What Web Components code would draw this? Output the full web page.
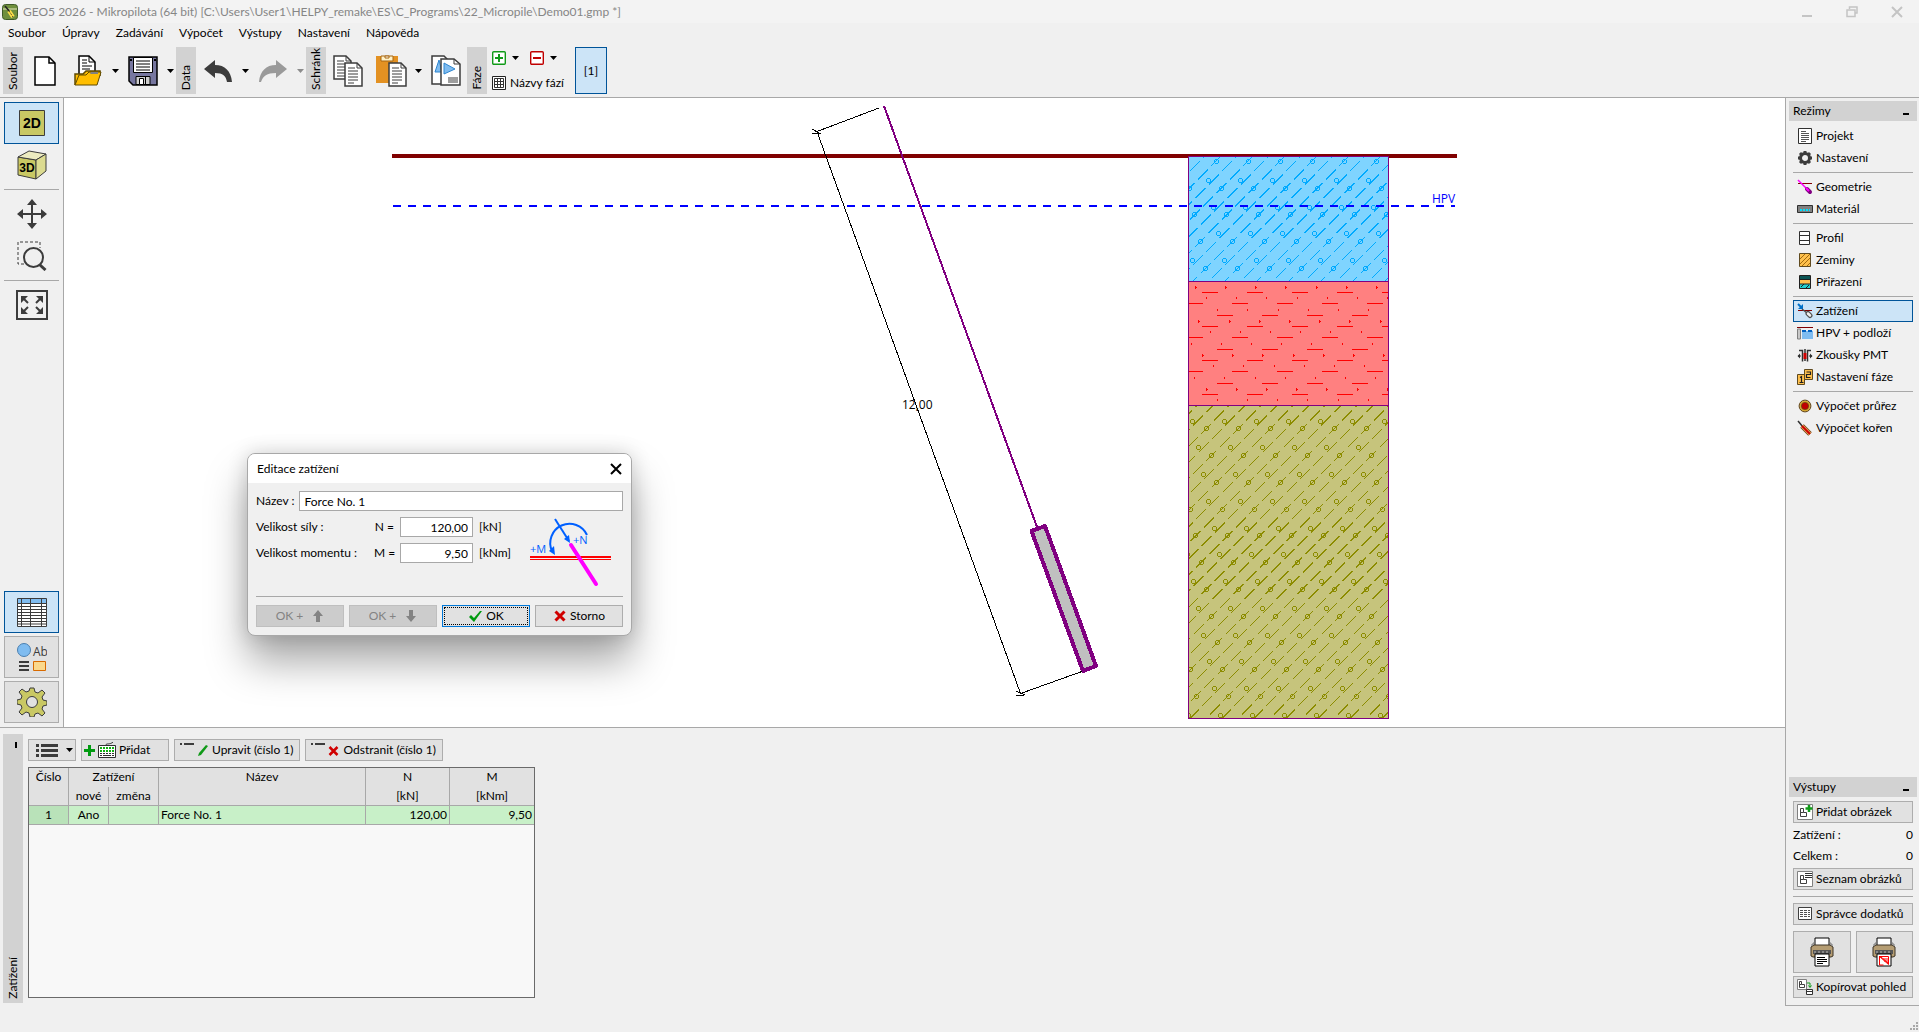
<!DOCTYPE html>
<html lang="cs">
<head>
<meta charset="utf-8">
<title>GEO5 2026 - Mikropilota</title>
<style>
html, body { margin: 0; height: 100%; background: #f0f0f0; }
body { font: 12px/16px Lato, "Open Sans", "Noto Sans", sans-serif; color: #000; }
</style>
</head>
<body>
<geo-app></geo-app>
<script>
const BASE = `
*, *::before, *::after { box-sizing: border-box; }
button { font: inherit; color: inherit; margin: 0; padding: 0; border: 0; background: none; }
:host([hidden]) { display: none; }
`;

function define(name, css, html, setup) {
  const tpl = document.createElement('template');
  tpl.innerHTML = `<style>${BASE}${css}</style>${html}`;
  customElements.define(name, class extends HTMLElement {
    constructor() {
      super();
      this.attachShadow({ mode: 'open' }).append(tpl.content.cloneNode(true));
    }
    connectedCallback() { if (setup) setup(this, this.shadowRoot); }
  });
}

/* name: [width, height, svg markup] */
const doc = (x, y, lines) => `<path d="M${x} ${y}h12l5 5v18h-17z" fill="#fff" stroke="#3c3c3c" stroke-width="1.5"/><path d="M${x + 12} ${y}v5h5" fill="none" stroke="#3c3c3c"/>${lines}`;
const frameB = '<path d="M.5 .5h15v15h-15z" fill="#fff" stroke="#808080"/><path d="M3.500 12.500v-8h3v4h3v4zM3.500 8.500h3" fill="none" stroke="#404040"/>';
const printer = extra => `<path d="M5 1h14v9H5z" fill="#fff" stroke="#000"/><path d="M1 10l3-2h16l3 2v9l-2 1H3l-2-1z" fill="#b59d73" stroke="#3c3224"/><path d="M1 8h2v-2h2M23 8h-2v-2h-2" fill="none" stroke="#777"/><path d="M3 13h18v4H3z" fill="#555"/><path d="M4 14h2v2H4zm4 0h2v2H8zm4 0h2v2h-2zm4 0h2v2h-2z" fill="#888"/><path d="M5 17h14v12H5z" fill="#fff" stroke="#000"/>${extra}`;
const ICONS = {
  app: [16, 16, '<rect x=".5" y=".5" width="15" height="15" rx="3" fill="#6f8f3c" stroke="#3f5a28"/><path d="M1 5h14" stroke="#e8e8c0"/><path d="M3 2l5 6" stroke="#222" stroke-width="1.500"/><path d="M7 7l4 6" stroke="#ffe04a" stroke-width="4"/><path d="M7 7l4 6" stroke="#222" stroke-width="1" stroke-dasharray="1 1"/>'],
  min: [12, 12, '<path d="M1 9h10v2H1z" fill="#c4c4c4"/>'],
  restore: [12, 12, '<path d="M3.500 3V1h7.500v6H9" fill="none" stroke="#c4c4c4" stroke-width="1.500"/><path d="M1 4h8v6.500H1z" fill="none" stroke="#c4c4c4" stroke-width="1.500"/>'],
  close: [12, 12, '<path d="M1 1l10 10M11 1L1 11" stroke="#c4c4c4" stroke-width="2"/>'],
  closeBlack: [12, 12, '<path d="M1 1l10 10M11 1L1 11" stroke="#000" stroke-width="2"/>'],
  arrow: [7, 4, '<path d="M0 0h7L3.500 4z" fill="currentColor"/>'],
  newfile: [22, 30, '<path d="M1 1h14l6 6v22H1z" fill="#fff" stroke="#000" stroke-width="1.500"/><path d="M15 1v6h6" fill="none" stroke="#000" stroke-width="1.500"/>'],
  open: [28, 31, '<path d="M5 22V1h10l6 6v11" fill="#fff" stroke="#000" stroke-width="1.500"/><path d="M15 1v6h6M8 5h5M8 8h5M8 11h10M8 14h8" fill="none" stroke="#000"/><path d="M1 30V19h8l3-3h14v5" fill="#ffbe00" stroke="#5f4a00" stroke-width="1.500"/><path d="M1 30l4-10h7l3-3h12l-4 13z" fill="#ffbe00" stroke="#5f4a00"/><path d="M17 17h7v2h-8z" fill="#808080"/>'],
  save: [30, 30, '<path d="M1 1h28v28H5l-4-4z" fill="#7777a0" stroke="#000" stroke-width="1.500"/><path d="M5.500 1.500h19v15h-19z" fill="#fff" stroke="#000"/><path d="M8 5h14M8 8h14M8 11h14M8 14h14" stroke="#000"/><path d="M26 3h2v2h-2zM2 3h2v2H2z" fill="#000"/><path d="M8 20.500h14v8H8z" fill="#d0d0d0" stroke="#000"/><path d="M11.500 22.500h4v6h-4z" fill="#fff" stroke="#000"/><path d="M17.500 21v8" stroke="#000"/>'],
  undo: [28, 24, '<path d="M0 10L11 1v5c10 0 16 6 17 17h-5c-1-6-4-9-12-9v5z" fill="#3c3c3c"/>'],
  redo: [28, 24, '<path d="M28 10L17 1v5C7 6 1 12 0 23h2c2-6 6-9 15-9v5z" fill="#9a9a9a"/>'],
  copy: [30, 32, doc(1, 1, '<path d="M4 6h7M4 9h10M4 12h10M4 15h10M4 18h8M4 21h8" stroke="#3c3c3c"/>') + doc(12, 8, '<path d="M15 13h7M15 16h10M15 19h10M15 22h10M15 25h10M15 28h6" stroke="#3c3c3c"/>')],
  paste: [31, 32, '<path d="M0 1h22v27H0z" fill="#e39122"/><path d="M5 1h12v5H5z" fill="#fff2c8" stroke="#a86710"/><path d="M9 1h4v2H9z" fill="#fff" stroke="#a86710"/>' + doc(13, 8, '<path d="M16 13h7M16 16h10M16 19h10M16 22h10M16 25h10M16 28h6" stroke="#3c3c3c"/>')],
  copypic: [30, 32, '<path d="M1 1h12l4 4v24H1z" fill="#fff" stroke="#3c3c3c" stroke-width="1.500"/><path d="M8 5l-4 12h7z" fill="#7fbcf0" stroke="#2f86d0"/><path d="M10 4h13l6 5v21H10z" fill="#fff" stroke="#3c3c3c" stroke-width="1.500"/><path d="M23 4v5h6" fill="none" stroke="#3c3c3c"/><path d="M13 8l11 6-11 5z" fill="#7fbcf0" stroke="#2f86d0"/><path d="M17 23h10M17 25h10M17 27h10" stroke="#3c3c3c"/>'],
  boxplus: [14, 14, '<rect x=".7" y=".7" width="12.600" height="12.600" rx="1" fill="#fff" stroke="#109a18" stroke-width="1.400"/><path d="M7 3v8M3 7h8" stroke="#109a18" stroke-width="2"/>'],
  boxminus: [14, 14, '<rect x=".7" y=".7" width="12.600" height="12.600" rx="1" fill="#fff" stroke="#c00000" stroke-width="1.400"/><path d="M3 7h8" stroke="#c00000" stroke-width="2"/>'],
  grid: [14, 14, '<path d="M.5 .5h13v13H.5z" fill="#fff" stroke="#222"/><path d="M2.500 2.500h9v9h-9zM2.500 5.500h9M2.500 8.500h9M5.500 2.500v9M8.500 2.500v9" fill="none" stroke="#333"/>'],
  d2: [26, 26, '<path d="M.5 .5h25v25H.5z" fill="#c9c864" stroke="#3c3c3c"/><text x="13" y="18" text-anchor="middle" font-family="Liberation Sans, sans-serif" font-weight="700" font-size="14" fill="#000">2D</text>'],
  d3: [30, 30, '<path d="M1 7L19 10V29L1 25z" fill="#c9c864" stroke="#3c3c3c"/><path d="M1 7L12 1l17 3-10 6z" fill="#ecebc0" stroke="#3c3c3c"/><path d="M19 10L29 4v17L19 29z" fill="#dcdb90" stroke="#3c3c3c"/><text x="10" y="22" text-anchor="middle" font-family="Liberation Sans, sans-serif" font-weight="700" font-size="12" fill="#000">3D</text>'],
  move: [30, 30, '<path d="M15 4v22M4 15h22" stroke="#3c3c3c" stroke-width="2"/><path d="M15 0l5 6H10zM15 30l5-6H10zM0 15l6-5v10zM30 15l-6-5v10z" fill="#3c3c3c"/>'],
  zoom: [30, 30, '<path d="M7 23H1V1h22v6" fill="none" stroke="#3c3c3c" stroke-dasharray="3 2"/><circle cx="16.500" cy="16.500" r="9.500" fill="none" stroke="#3c3c3c" stroke-width="2"/><path d="M22.500 23.500l6 5.500" stroke="#3c3c3c" stroke-width="3"/>'],
  fit: [32, 30, '<path d="M1 1h30v28H1z" fill="none" stroke="#3c3c3c" stroke-width="2"/><path d="M5 6h7l-7 7zM27 6h-7l7 7zM5 24h7l-7-7zM27 24h-7l7-7z" fill="#3c3c3c"/><path d="M8 9l4 4M24 9l-4 4M8 21l4-4M24 21l-4-4" stroke="#3c3c3c" stroke-width="2"/>'],
  table: [30, 29, '<path d="M1 1h28v27H1z" fill="#fff"/><path d="M1 1h28v4H1z" fill="#7fbcf0"/><path d="M.5 .5h29v28H.5zM0 5.500h30M0 8.500h30M0 11.500h30M0 14.500h30M0 17.500h30M0 20.500h30M0 23.500h30M0 26h30M4.500 0v29M13.500 0v29M24.500 0v29" fill="none" stroke="#3c3c3c"/>'],
  legend: [30, 28, '<circle cx="7" cy="7" r="6.500" fill="#7fbcf0" stroke="#4a7fb0"/><text x="16" y="13" font-family="Open Sans, sans-serif" font-size="12" fill="#3c3c3c">Ab</text><path d="M2 18h10v2H2zM2 22h10v2H2zM2 26h10v2H2z" fill="#3c3c3c"/><path d="M16.500 18.500h12v9h-12z" fill="#fbd88c" stroke="#d86a00"/>'],
  gear: [30, 30, '<path d="M13 1h4l1 4 3 1 4-3 3 3-3 4 1 3 4 1v4l-4 1-1 3 3 4-3 3-4-3-3 1-1 3h-4l-1-4-3-1-4 3-3-3 3-4-1-3-4-1v-4l4-1 1-3-3-4 3-3 4 3 3-1z" fill="#c9c864" stroke="#3c3c3c"/><circle cx="15" cy="15" r="5.500" fill="#e1e1e1" stroke="#3c3c3c"/>'],
  project: [16, 16, '<path d="M1.500 .5h13v15h-13z" fill="#fff" stroke="#303030"/><path d="M4 3.500h5M4 5.500h8M4 7.500h8M4 9.500h8M4 11.500h8M4 13.500h5" stroke="#555"/>'],
  cog: [16, 16, '<circle cx="8" cy="8" r="4.500" fill="none" stroke="#3c3c3c" stroke-width="3"/><path d="M8 1v3M8 12v3M1 8h3M12 8h3M3 3l2 2M11 11l2 2M13 3l-2 2M3 13l2-2" stroke="#3c3c3c" stroke-width="3"/>'],
  geom: [16, 16, '<path d="M1 4.500h14" stroke="#800000"/><path d="M1 1l9 9" stroke="#f0f" stroke-width="1.500"/><path d="M10 10l3 3" stroke="#800080" stroke-width="4" stroke-linecap="round"/><path d="M9 9l3 3" stroke="#f0f" stroke-width="2"/>'],
  material: [16, 16, '<path d="M.5 4.500h15v7H.5z" fill="#808080" stroke="#303030"/><path d="M3 9h10" stroke="#00e0ff" stroke-width="2" stroke-dasharray="2 1"/>'],
  profile: [16, 16, '<path d="M2.500 1.500h10v13h-10zM2.500 5.500h10M2.500 10.500h10" fill="#fff" stroke="#303030"/>'],
  soils: [16, 16, '<path d="M2.500 1.500h11v13h-11z" fill="#ffc04c" stroke="#5f4a20"/><path d="M3 7l5-5M3 12L13 2M5 14l8-8M10 14l3-3" stroke="#a06a10"/>'],
  assign: [16, 16, '<path d="M2.500 1.500h11v13h-11z" fill="#ffc04c" stroke="#202020"/><path d="M3 2h10v3H3z" fill="#0b5555"/><path d="M3 10h10v4H3z" fill="#20d0d0"/><path d="M3 5.500h10M3 10h10M4 13l3-3M9 14l3-3" stroke="#202020"/>'],
  load: [16, 16, '<path d="M1 7.500h14" stroke="#800000"/><path d="M1 1l4 4" stroke="#0070c8" stroke-width="2"/><path d="M6 1v5H1z" fill="#0070c8"/><path d="M5 6l5 4" stroke="#505050" stroke-width="1.500"/><path d="M11 10.500l2 2" stroke="#505050" stroke-width="5" stroke-linecap="round"/><path d="M11 10.500l2 2" stroke="#f0f0f0" stroke-width="2.500" stroke-linecap="round"/>'],
  gwt: [16, 16, '<path d="M0 2.500h16" stroke="#800000"/><path d="M.5 4h3v10h-3z" fill="#c8c8c8" stroke="#808080"/><path d="M5 6h11v8H5z" fill="#7fbcf0"/><path d="M5 6h11" stroke="#0060c0" stroke-width="2" stroke-dasharray="4 2"/>'],
  pmt: [16, 16, '<path d="M2 3.500h3.500v11M14 3.500h-3.500v11" fill="none" stroke="#303030" stroke-width="1.500"/><path d="M8 2v12" stroke="#303030" stroke-width="1.500"/><path d="M8 6v6" stroke="#d00000" stroke-width="3"/><path d="M1 9h3M15 9h-3" stroke="#303030"/><path d="M3 6.500v5L.5 9zM13 6.500v5L15.500 9z" fill="#303030"/>'],
  stage: [16, 16, '<path d="M.5 5.500h7v10h-7z" fill="#ffc04c" stroke="#5f4a20"/><path d="M7.500 .5h8v10h-8z" fill="#ffc04c" stroke="#5f4a20"/><path d="M3 8.500l1.500-1v6M2.500 13.500h4M9.500 3h4v2.500h-4v3h4" fill="none" stroke="#202020" stroke-width="1.200"/>'],
  section: [16, 16, '<circle cx="8" cy="8" r="4.500" fill="#c00000" stroke="#d8a830" stroke-width="2"/><circle cx="8" cy="8" r="5.900" fill="none" stroke="#5f4010"/><circle cx="8" cy="8" r="3.700" fill="none" stroke="#5f4010" stroke-width=".7"/>'],
  root: [16, 16, '<path d="M1 1l5 6" stroke="#303030" stroke-width="1.500"/><path d="M5 6l8 8" stroke="#6f3a10" stroke-width="5"/><path d="M5 6l8 8" stroke="#e0b060" stroke-width="3.500"/><path d="M5 6l8 8" stroke="#d00000" stroke-width="2"/>'],
  picadd: [16, 16, frameB + '<path d="M12 1v7M8.500 4.500h7" stroke="#109a18" stroke-width="2.500"/>'],
  piclist: [16, 16, frameB + '<path d="M8 2.500h7M8 4.500h7M8 6.500h7" stroke="#303030"/>'],
  annex: [16, 16, '<path d="M1.500 1.500h13v12h-13z" fill="#fff" stroke="#404040"/><path d="M3 4.500h10M3 6.500h10M3 8.500h10M3 10.500h10" stroke="#505050" stroke-dasharray="3 1"/>'],
  piccopy: [16, 16, '<path d="M.5 .5h9v10h-9z" fill="#fff" stroke="#808080"/><path d="M2.500 8.500v-6h2v3h3v3zM2.500 5.500h2" fill="none" stroke="#404040"/><path d="M10 4h3v4M11.500 6.500L13 8.500l1.500-2" fill="none" stroke="#109a18"/><path d="M9.500 10.500h6v5h-6z" fill="#fff" stroke="#303030"/><path d="M10 12.500h5" stroke="#303030"/>'],
  print: [24, 30, printer('<path d="M7 20.500h8M7 22.500h10M7 24.500h10M7 26.500h6" stroke="#000"/>')],
  printpic: [24, 30, printer('<path d="M7.500 19.500h9v8z" fill="#fff" stroke="#f00"/><path d="M9 20l7 6M11 22h5M12 24h4M7.500 19v9h4" fill="none" stroke="#f00"/>')],
  list: [22, 14, '<path d="M0 1h3v3H0zM0 6h3v3H0zM0 11h3v3H0zM5 1h17v3H5zM5 6h17v3H5zM5 11h17v3H5z" fill="#3c3c3c"/>'],
  plus: [11, 11, '<path d="M5.500 0v11M0 5.500h11" stroke="#009a10" stroke-width="3"/>'],
  keyboard: [18, 16, '<path d="M8 3c0-2 4 0 7-3" fill="none" stroke="#303030"/><path d="M.5 3.500h17v12H.5z" fill="#fff" stroke="#303030"/><path d="M2 6h14M2 9h14" stroke="#10b010" stroke-width="2" stroke-dasharray="2 1"/><path d="M2 11.500h14" stroke="#303030" stroke-dasharray="2 1"/><path d="M2 13.500h2M5 13.500h8M14 13.500h2" stroke="#303030"/>'],
  edit: [28, 14, '<path d="M0 0h2v2H0zM4 0h10v2H4z" fill="#3c3c3c"/><path d="M18 13l1-3 7-8 2 1-7 9z" fill="#109a18"/>'],
  remove: [28, 14, '<path d="M0 0h2v2H0zM4 0h10v2H4z" fill="#3c3c3c"/><path d="M18.500 4l8 8M26.500 4l-8 8" stroke="#d00000" stroke-width="2.500"/>'],
  up: [10, 12, '<path d="M5 0l5 6H7v6H3V6H0z" fill="#838383"/>'],
  down: [10, 12, '<path d="M5 12l5-6H7V0H3v6H0z" fill="#838383"/>'],
  check: [13, 11, '<path d="M0 6l2-2 3 3 6-7h2L5 11z" fill="#009a10"/>'],
  cross: [12, 12, '<path d="M1.500 1.500l9 9M10.500 1.500l-9 9" stroke="#d00000" stroke-width="3"/>'],
  grip: [9, 9, '<path d="M6 0h2v2H6zM6 3h2v2H6zM3 3h2v2H3zM6 6h2v2H6zM3 6h2v2H3zM0 6h2v2H0z" fill="#a8a8a8"/>'],
  scheme: [82, 70, '<path d="M25 2l14 22" stroke="#0060ff" stroke-width="2" fill="none"/><path d="M40 26l-6-4 5-4z" fill="#0060ff"/><path d="M57 18A19 19 0 1 0 22 34" stroke="#0060ff" stroke-width="2" fill="none"/><path d="M25 38l-6-4 5-5z" fill="#0060ff"/><path d="M0 40h81" stroke="#f00" stroke-width="2"/><path d="M0 42.500h81" stroke="#f00"/><path d="M41 28l25 39" stroke="#f0f" stroke-width="4" stroke-linecap="round"/><text x="0" y="36" font-family="Open Sans, sans-serif" font-size="11" fill="#0060ff">+M</text><text x="43" y="27" font-family="Open Sans, sans-serif" font-size="11" fill="#0060ff">+N</text>'],
};

define('geo-icon', `:host { display: inline-flex; flex: none; } svg { display: block; }`, `<svg aria-hidden="true"></svg>`, (el, root) => {
  const [w, h, body] = ICONS[el.getAttribute('name')];
  const svg = root.querySelector('svg');
  svg.setAttribute('width', w);
  svg.setAttribute('height', h);
  svg.setAttribute('viewBox', `0 0 ${w} ${h}`);
  svg.innerHTML = body;
});

define('title-bar', `
:host { display: flex; align-items: center; height: 23px; padding: 0 16px 0 2px; background: #f3f3f3; color: #868686; gap: 5px; }
.text { flex: 1; white-space: nowrap; overflow: hidden; }
.controls { display: flex; gap: 33px; }
.controls button { display: flex; }
`, `<geo-icon name="app"></geo-icon><span class="text"><slot></slot></span>
<div class="controls"><button aria-label="Minimalizovat"><geo-icon name="min"></geo-icon></button><button aria-label="Obnovit"><geo-icon name="restore"></geo-icon></button><button aria-label="Zavřít"><geo-icon name="close"></geo-icon></button></div>`);

define('menu-bar', `
:host { display: flex; height: 20px; align-items: center; padding-left: 8px; gap: 16px; white-space: nowrap; }
`, `<slot></slot>`);

define('menu-item', `:host { display: block; } button { display: block; }`, `<button><slot></slot></button>`);

define('side-tab', `
:host { display: flex; flex: none; width: 20px; align-items: flex-end; justify-content: center; background: #d2d2d2; padding-bottom: 4px; }
.t { writing-mode: vertical-rl; transform: rotate(180deg); white-space: nowrap; line-height: 20px; }
`, `<span class="t"><slot></slot></span>`);

define('tool-group', `:host { display: flex; height: 47px; gap: 1px; }`, `<slot></slot>`);

define('tool-button', `
:host { display: flex; }
button { display: flex; align-items: center; justify-content: center; }
.main { width: 42px; }
.drop { width: 12px; }
:host([dim]) .drop { color: #8c8c8c; }
`, `<button class="main"><slot></slot></button>`, (el, root) => {
  root.querySelector('.main').setAttribute('aria-label', el.getAttribute('label'));
  if (el.hasAttribute('menu')) {
    const b = document.createElement('button');
    b.className = 'drop';
    b.setAttribute('aria-label', el.getAttribute('label') + ' – nabídka');
    b.innerHTML = '<geo-icon name="arrow"></geo-icon>';
    root.append(b);
  }
});

define('phase-tools', `
:host { display: flex; padding-left: 4px; gap: 11px; }
.col { display: flex; flex-direction: column; justify-content: space-between; padding: 4px 0 3px; }
.row { display: flex; align-items: center; gap: 6px; }
.row button { display: flex; align-items: center; }
.pair { display: flex; }
.row .drop { width: 18px; justify-content: center; }
.row .names { gap: 4px; height: 16px; white-space: nowrap; }
.phase { width: 32px; background: #cce4f7; border: 1px solid #005499; }
`, `<div class="col">
<div class="row"><div class="pair"><button aria-label="Přidat fázi"><geo-icon name="boxplus"></geo-icon></button><button class="drop" aria-label="Nabídka přidání"><geo-icon name="arrow"></geo-icon></button></div>
<div class="pair"><button aria-label="Odebrat fázi"><geo-icon name="boxminus"></geo-icon></button><button class="drop" aria-label="Nabídka odebrání"><geo-icon name="arrow"></geo-icon></button></div></div>
<div class="row"><button class="names"><geo-icon name="grid"></geo-icon>Názvy fází</button></div>
</div><button class="phase">[1]</button>`);

define('view-button', `
:host { display: block; }
button { display: flex; width: 100%; height: 42px; align-items: center; justify-content: center; border: 1px solid transparent; }
:host([raised]) button { background: #e1e1e1; border-color: #adadad; }
:host([active]) button { background: #cce4f7; border-color: #005499; }
`, `<button><slot></slot></button>`, (el, root) => root.querySelector('button').setAttribute('aria-label', el.getAttribute('label')));

define('geo-rule', `:host { display: block; height: 1px; margin: 3px 0; background: #a8a8a8; }`, ``);

define('view-tools', `
:host { display: flex; flex: none; flex-direction: column; justify-content: space-between; width: 64px; padding: 4px; border-right: 1px solid #a8a8a8; }
.low { display: flex; flex-direction: column; gap: 3px; }
`, `<div>
<view-button active label="2D"><geo-icon name="d2"></geo-icon></view-button>
<view-button label="3D"><geo-icon name="d3"></geo-icon></view-button>
<geo-rule></geo-rule>
<view-button label="Posun"><geo-icon name="move"></geo-icon></view-button>
<view-button label="Lupa"><geo-icon name="zoom"></geo-icon></view-button>
<geo-rule></geo-rule>
<view-button label="Celý výkres"><geo-icon name="fit"></geo-icon></view-button>
</div>
<div class="low">
<view-button active label="Tabulka"><geo-icon name="table"></geo-icon></view-button>
<view-button raised label="Legenda"><geo-icon name="legend"></geo-icon></view-button>
<view-button raised label="Nastavení zobrazení"><geo-icon name="gear"></geo-icon></view-button>
</div>`);

function gravelHatch(x0, y0, x1, y1) {
  let lines = '', rings = '';
  const ax = 1216, ay = 161.300, dx = 5.400, dy = 26.750;
  for (let k = -1; k < 23; k++) {
    for (let m = -8; m < 10; m++) {
      const x = ax + k * dx + m * 32, y = ay + k * dy;
      if (x < x0 - 50 || x > x1 + 50 || y < y0 - 50 || y > y1 + 50) continue;
      for (const [ox, oy] of [[0, 0], [13.300, -13.400], [11, 5], [24.300, -8.400]]) {
        const cx = x + ox, cy = y + oy;
        lines += `M${cx - 5} ${cy + 5}L${cx + 5} ${cy - 5}`;
      }
      for (const [ox, oy] of [[0, 0], [-8, 19]]) {
        const rx = Math.floor(x + ox) + .5, ry = Math.floor(y + oy) + .5;
        rings += `M${rx - 2} ${ry}a2 2 0 1 1 4 0a2 2 0 1 1 -4 0`;
      }
    }
  }
  return lines + rings;
}

function clayHatch(x0, y0, x1, y1) {
  let d = '';
  for (let r = 0, y = y0 + 11; y < y1; r++) {
    const off = [14, -1, 29][r % 3];
    for (let x = x0 + off - 45; x < x1; x += 45) d += `M${x} ${y + .5}h16`;
    y += [11, 12, 11][r % 3];
  }
  for (let k = 0; k < 11; k++) {
    const y = Math.round(y0 + 6 + k * 11.330);
    for (let m = -5; m < 7; m++) {
      const x = Math.round(1225 + k * 11.200 + m * 30.200 - Math.floor(k / 3) * 30);
      d += k % 3 ? `M${x + .5} ${y - 1}v2` : `M${x + .5} ${y - 1}v3M${x + 1} ${y + .5}h1`;
    }
  }
  return d;
}

define('pile-canvas', `
:host { display: block; flex: 1; min-width: 0; min-height: 0; background: #fff; overflow: hidden; }
svg { display: block; width: 100%; height: 100%; }
text { font: 12px "Open Sans", "Noto Sans", sans-serif; }
`, `<svg viewBox="64 98 1721 629" role="img" aria-label="Schéma mikropiloty" shape-rendering="crispEdges">
<defs>
<clipPath id="c1"><path d="M1189 157h199v124h-199z"/></clipPath>
<clipPath id="c2"><path d="M1189 282h199v123h-199z"/></clipPath>
<clipPath id="c3"><path d="M1189 406h199v312h-199z"/></clipPath>
</defs>
<path d="M392 154h1065v4H392z" fill="#800000"/>
<path d="M1188 157h201v125h-201z" fill="#7fd4ff"/>
<path d="M1188 281h201v125h-201z" fill="#ff8080"/>
<path d="M1188 405h201v314h-201z" fill="#c6c47c"/>
<path id="h1" clip-path="url(#c1)" fill="none" stroke="#00aaff"/>
<path id="h2" clip-path="url(#c2)" fill="none" stroke="#ff0000"/>
<path id="h3" clip-path="url(#c3)" fill="none" stroke="#8c8c00"/>
<path d="M1188.500 156.500h200v562h-200zM1188 281.500h200M1188 405.500h200" fill="none" stroke="#800080"/>
<path d="M393 206H1455" stroke="#0000ff" stroke-width="2" stroke-dasharray="8 7.120" fill="none"/>
<text x="1432" y="203" fill="#0000ff">HPV</text>
<path d="M884 106L1037 527" stroke="#800080" stroke-width="2" fill="none"/>
<path d="M1031.500 531L1045 526L1096 666L1083 671z" fill="#c0c0c0" stroke="#800080" stroke-width="4" stroke-linejoin="round"/>
<path d="M879 108L817 131.500L1020.500 693.500L1082 671.500M812 129l9 5M812 133.500h8M1016 691l9 4M1016 695h8" fill="none" stroke="#000"/>
<text x="902" y="409">12,00</text>
</svg>`, (el, root) => {
  root.getElementById('h1').setAttribute('d', gravelHatch(1189, 157, 1388, 281));
  root.getElementById('h2').setAttribute('d', clayHatch(1188, 281, 1388, 405));
  root.getElementById('h3').setAttribute('d', gravelHatch(1189, 406, 1388, 718));
});

define('geo-button', `
:host { display: block; }
button { display: flex; width: 100%; height: 22px; align-items: center; justify-content: var(--justify, flex-start); gap: var(--gap, 3px); padding: var(--pad, 0 3px); background: #e1e1e1; border: 1px solid #adadad; white-space: nowrap; }
:host([tall]) button { height: 42px; justify-content: center; }
:host([primary]) button { border-color: #0078d7; outline: 1px dotted #000; outline-offset: -3px; }
button:disabled { background: #ccc; border-color: #bfbfbf; color: #838383; }
`, `<button><slot></slot></button>`, (el, root) => {
  const b = root.querySelector('button');
  b.disabled = el.hasAttribute('disabled');
  if (el.hasAttribute('label')) b.setAttribute('aria-label', el.getAttribute('label'));
});

define('mode-item', `
:host { display: block; }
a { display: flex; height: 22px; align-items: center; gap: 3px; padding: 0 3px; border: 1px solid transparent; color: inherit; text-decoration: none; white-space: nowrap; }
:host([active]) a { background: #cce4f7; border-color: #005499; }
`, `<a href="#"><slot></slot></a>`, (el, root) => {
  const icon = document.createElement('geo-icon');
  icon.setAttribute('name', el.getAttribute('icon'));
  root.querySelector('a').prepend(icon);
});

define('side-panel', `
:host { display: block; padding: 3px 2px 0 3px; }
header { display: flex; height: 20px; align-items: center; justify-content: space-between; background: #d2d2d2; padding: 0 8px 0 4px; }
header button { width: 6px; height: 2px; background: #000; align-self: flex-end; margin-bottom: 6px; }
.body { padding: 4px 4px 7px; }
`, `<header><span></span><button aria-label="Sbalit"></button></header><div class="body"><slot></slot></div>`, (el, root) => {
  root.querySelector('span').textContent = el.getAttribute('heading');
});

define('count-row', `:host { display: flex; justify-content: space-between; height: 21px; align-items: center; }`, `<slot></slot><slot name="value"></slot>`);

define('mode-bar', `
:host { display: flex; flex: none; flex-direction: column; justify-content: space-between; width: 134px; border-left: 1px solid #a8a8a8; border-bottom: 1px solid #a8a8a8; }
.prints { display: grid; grid-template-columns: 1fr 1fr; gap: 5px; margin: 6px 0 3px; }
.counts { padding: 1px 0 2px; }
`, `<side-panel heading="Režimy">
<mode-item icon="project">Projekt</mode-item>
<mode-item icon="cog">Nastavení</mode-item>
<geo-rule></geo-rule>
<mode-item icon="geom">Geometrie</mode-item>
<mode-item icon="material">Materiál</mode-item>
<geo-rule></geo-rule>
<mode-item icon="profile">Profil</mode-item>
<mode-item icon="soils">Zeminy</mode-item>
<mode-item icon="assign">Přiřazení</mode-item>
<geo-rule></geo-rule>
<mode-item icon="load" active>Zatížení</mode-item>
<mode-item icon="gwt">HPV + podloží</mode-item>
<mode-item icon="pmt">Zkoušky PMT</mode-item>
<mode-item icon="stage">Nastavení fáze</mode-item>
<geo-rule></geo-rule>
<mode-item icon="section">Výpočet průřez</mode-item>
<mode-item icon="root">Výpočet kořen</mode-item>
</side-panel>
<side-panel heading="Výstupy">
<geo-button><geo-icon name="picadd"></geo-icon>Přidat obrázek</geo-button>
<div class="counts"><count-row>Zatížení :<span slot="value">0</span></count-row><count-row>Celkem :<span slot="value">0</span></count-row></div>
<geo-button><geo-icon name="piclist"></geo-icon>Seznam obrázků</geo-button>
<geo-rule style="margin: 6px 0"></geo-rule>
<geo-button><geo-icon name="annex"></geo-icon>Správce dodatků</geo-button>
<div class="prints"><geo-button tall label="Tisk protokolu"><geo-icon name="print"></geo-icon></geo-button><geo-button tall label="Tisk obrázku"><geo-icon name="printpic"></geo-icon></geo-button></div>
<geo-button><geo-icon name="piccopy"></geo-icon>Kopírovat pohled</geo-button>
</side-panel>`);

define('load-table', `
:host { display: block; width: 507px; height: 231px; border: 1px solid #6a6a6a; background: #f8f8f8; }
table { width: 100%; border-collapse: separate; border-spacing: 0; table-layout: fixed; line-height: 18px; }
th { font-weight: 400; background: #e1e1e1; padding: 0; vertical-align: top; height: 19px; border-right: 1px solid #a8a8a8; }
.end { border-bottom: 1px solid #a8a8a8; }
tr > .last { border-right: 0; }
td { height: 19px; padding: 0 2px; background: #c8f0c8; border-right: 1px solid #a8a8a8; border-bottom: 1px solid #a8a8a8; }
td:first-child { background: #b9e2b9; }
.c { text-align: center; } .r { text-align: right; }
.u { display: block; height: 19px; }
`, `<table>
<colgroup><col style="width:40px"><col style="width:40px"><col style="width:50px"><col><col style="width:84px"><col style="width:84px"></colgroup>
<thead>
<tr><th rowspan="2" class="end">Číslo</th><th colspan="2">Zatížení</th><th rowspan="2" class="end">Název</th><th rowspan="2" class="end"><span class="u">N</span>[kN]</th><th rowspan="2" class="end last"><span class="u">M</span>[kNm]</th></tr>
<tr><th class="end">nové</th><th class="end">změna</th></tr>
</thead>
<tbody><tr><td class="c">1</td><td class="c">Ano</td><td></td><td>Force No. 1</td><td class="r">120,00</td><td class="r last">9,50</td></tr></tbody>
</table>`);

define('load-panel', `
:host { display: flex; gap: 5px; padding: 6px 3px 3px; border-top: 1px solid #a8a8a8; }
.tab { display: flex; flex-direction: column; width: 20px; background: #d2d2d2; align-items: center; }
.tab button { width: 2px; height: 6px; background: #000; margin: 8px 0 0 6px; }
side-tab { flex: 1; }
.content { display: flex; flex-direction: column; gap: 6px; padding: 5px 0; }
.bar { display: flex; gap: 5px; }
.list { --pad: 0 2px 0 7px; --justify: space-between; width: 48px; }
.add { --pad: 0 2px; width: 88px; }
.wide { --pad: 0 6px 0 5px; --gap: 4px; }
`, `<div class="tab"><button aria-label="Sbalit"></button><side-tab>Zatížení</side-tab></div>
<div class="content">
<div class="bar">
<geo-button class="list" label="Seznam"><geo-icon name="list"></geo-icon><geo-icon name="arrow"></geo-icon></geo-button>
<geo-button class="add"><geo-icon name="plus"></geo-icon><geo-icon name="keyboard"></geo-icon>Přidat</geo-button>
<geo-button class="wide"><geo-icon name="edit"></geo-icon>Upravit (číslo 1)</geo-button>
<geo-button class="wide"><geo-icon name="remove"></geo-icon>Odstranit (číslo 1)</geo-button>
</div>
<load-table></load-table>
</div>`);

define('load-dialog', `
:host { display: block; width: 385px; border: 1px solid #a8a8a8; border-radius: 8px; overflow: hidden; background: #f0f0f0; box-shadow: 0 26px 40px rgba(0,0,0,.34), 0 0 20px rgba(0,0,0,.16); }
header { display: flex; height: 29px; align-items: center; justify-content: space-between; padding: 0 9px; background: #fff; }
header button { display: flex; }
form { padding: 8px; }
.line { display: flex; align-items: center; gap: 5px; }
input { font: inherit; height: 20px; border: 1px solid #a8a8a8; padding: 0 4px; margin: 0; background: #fff; color: #000; border-radius: 0; outline: 0; min-width: 0; }
.line input { flex: 1; }
.mid { display: flex; justify-content: space-between; margin-top: 6px; padding-right: 11px; }
.grid { display: grid; grid-template-columns: 112px 20px 73px auto; column-gap: 6px; row-gap: 6px; align-items: center; align-content: start; white-space: nowrap; }
.grid input { text-align: right; width: 73px; }
.eq { text-align: right; }
geo-rule { margin: 9px 0 8px; }
.buttons { display: grid; grid-template-columns: repeat(4, 1fr); gap: 5px; --justify: center; }
.buttons geo-icon { margin: 0 1px; }
.buttons .off geo-icon { margin-left: 7px; }
`, `<header><span>Editace zatížení</span><button aria-label="Zavřít"><geo-icon name="closeBlack"></geo-icon></button></header>
<form onsubmit="return false">
<div class="line"><label for="nm">Název :</label><input id="nm" value="Force No. 1"></div>
<div class="mid"><div class="grid">
<label for="n">Velikost síly :</label><span class="eq">N =</span><input id="n" value="120,00"><span>[kN]</span>
<label for="m">Velikost momentu :</label><span class="eq">M =</span><input id="m" value="9,50"><span>[kNm]</span>
</div><geo-icon name="scheme"></geo-icon></div>
<geo-rule></geo-rule>
<div class="buttons">
<geo-button class="off" disabled>OK + <geo-icon name="up"></geo-icon></geo-button>
<geo-button class="off" disabled>OK + <geo-icon name="down"></geo-icon></geo-button>
<geo-button primary><geo-icon name="check"></geo-icon>OK</geo-button>
<geo-button><geo-icon name="cross"></geo-icon>Storno</geo-button>
</div>
</form>`);

define('status-bar', `:host { display: flex; height: 26px; justify-content: flex-end; align-items: flex-end; padding: 0 0 1px; }`, `<geo-icon name="grip"></geo-icon>`);

define('geo-app', `
:host { display: flex; flex-direction: column; min-height: 100vh; position: relative; }
.tools { display: flex; padding: 4px 3px 3px; border-bottom: 1px solid #a8a8a8; }
.body { display: flex; flex: 1; }
.left { display: flex; flex-direction: column; flex: 1; min-width: 0; }
.work { display: flex; flex: 1; min-height: 0; }
load-dialog { position: absolute; left: 247px; top: 453px; }
`, `<title-bar>GEO5 2026 - Mikropilota (64 bit) [C:\\Users\\User1\\HELPY_remake\\ES\\C_Programs\\22_Micropile\\Demo01.gmp *]</title-bar>
<menu-bar><menu-item>Soubor</menu-item><menu-item>Úpravy</menu-item><menu-item>Zadávání</menu-item><menu-item>Výpočet</menu-item><menu-item>Výstupy</menu-item><menu-item>Nastavení</menu-item><menu-item>Nápověda</menu-item></menu-bar>
<div class="tools">
<tool-group><side-tab>Soubor</side-tab>
<tool-button label="Nový"><geo-icon name="newfile"></geo-icon></tool-button>
<tool-button label="Otevřít" menu><geo-icon name="open"></geo-icon></tool-button>
<tool-button label="Uložit" menu><geo-icon name="save"></geo-icon></tool-button></tool-group>
<tool-group><side-tab>Data</side-tab>
<tool-button label="Zpět" menu><geo-icon name="undo"></geo-icon></tool-button>
<tool-button label="Znovu" menu dim><geo-icon name="redo"></geo-icon></tool-button></tool-group>
<tool-group><side-tab>Schránk</side-tab>
<tool-button label="Kopírovat"><geo-icon name="copy"></geo-icon></tool-button>
<tool-button label="Vložit" menu><geo-icon name="paste"></geo-icon></tool-button>
<tool-button label="Kopírovat obrázek"><geo-icon name="copypic"></geo-icon></tool-button></tool-group>
<tool-group><side-tab>Fáze</side-tab><phase-tools></phase-tools></tool-group>
</div>
<div class="body">
<div class="left">
<div class="work"><view-tools></view-tools><pile-canvas></pile-canvas></div>
<load-panel></load-panel>
</div>
<mode-bar></mode-bar>
</div>
<status-bar></status-bar>
<load-dialog></load-dialog>`);
</script>
</body>
</html>
